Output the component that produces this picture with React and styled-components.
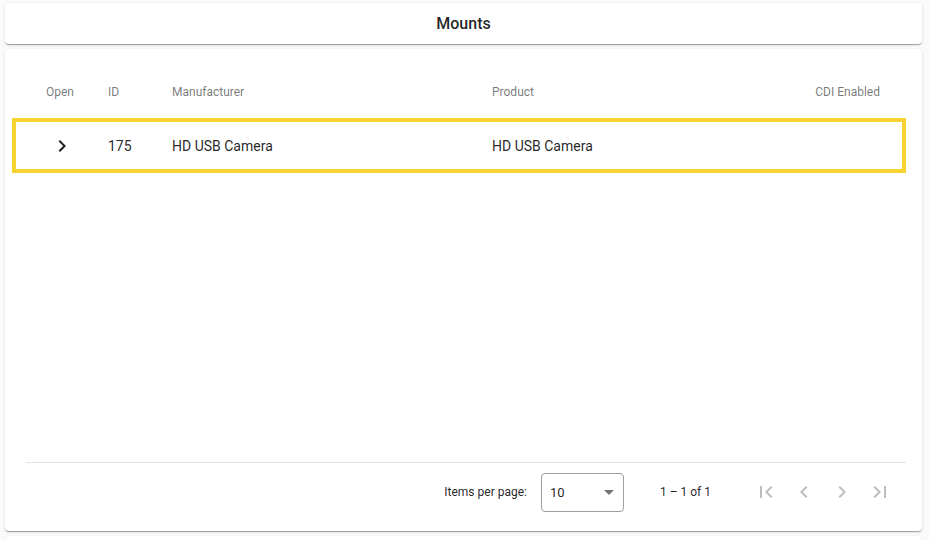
import styled, { createGlobalStyle } from "styled-components";

const Global = createGlobalStyle`
  body { margin: 0; background: #fafafa; font-family: Roboto, "Liberation Sans", sans-serif; }
`;

const Page = styled.div`
  display: flex;
  flex-direction: column;
  gap: 5px;
  padding: 3px 7px 0 5px;
  height: 540px;
  box-sizing: border-box;
  overflow: hidden;
`;

const Card = styled.div`
  background: #fff;
  border-radius: 4px;
  flex-shrink: 0;
  box-shadow: 0 2px 1px -1px rgba(0,0,0,.2), 0 1px 1px 0 rgba(0,0,0,.14), 0 1px 3px 0 rgba(0,0,0,.12);
`;

const TitleCard = styled(Card)`
  height: 41px;
  display: flex;
  align-items: center;
  justify-content: center;
  font-size: 16px;
  font-weight: 500;
  color: rgba(0,0,0,.87);
`;

const MainCard = styled(Card)`
  height: 482px;
  display: flex;
  flex-direction: column;
  padding: 0 16px 0 7px;
`;

const HeadRow = styled.div`
  display: grid;
  grid-template-columns: 96px 64px 320px 1fr 120px;
  align-items: center;
  margin-top: 28px;
  height: 30px;
  padding: 0 26px 0 0;
  font-size: 12px;
  color: rgba(0,0,0,.54);
`;

const Row = styled.div`
  display: grid;
  grid-template-columns: 92px 64px 320px 1fr 120px;
  align-items: center;
  margin-top: 11px;
  height: 47px;
  border: 4px solid #f6d330;
  padding-right: 22px;
  font-size: 14px;
  color: rgba(0,0,0,.87);
`;

const Cell = styled.div`
  text-align: ${(p) => p.align || "left"};
`;

const IconCell = styled.div`
  display: flex;
  justify-content: center;
`;

const Spacer = styled.div` flex: 1; `;

const Footer = styled.div`
  margin-left: 14px;
  margin-bottom: 15px;
  border-top: 1px solid #e0e0e0;
  height: 48px;
  padding-top: 5px;
  display: flex;
  align-items: center;
  justify-content: flex-end;
  font-size: 12px;
  color: rgba(0,0,0,.87);
`;

const Select = styled.div`
  margin-left: 14px;
  width: 83px;
  height: 39px;
  box-sizing: border-box;
  border: 1px solid #9e9e9e;
  border-radius: 4px;
  display: flex;
  align-items: center;
  justify-content: space-between;
  padding: 0 9px 0 8px;
  font-size: 13px;
`;

const Range = styled.div`
  margin: 0 37px 0 36px;
`;

const Nav = styled.div`
  display: flex;
  gap: 2px;
  margin-right: 8px;
`;

const NavBtn = styled.div`
  width: 36px;
  height: 36px;
  display: flex;
  align-items: center;
  justify-content: center;
`;

const Icon = ({ d, color = "rgba(0,0,0,.26)", size = 24 }) => (
  <svg width={size} height={size} viewBox="0 0 24 24"><path d={d} fill={color} /></svg>
);

const CHEV = "M10 6L8.59 7.41 13.17 12l-4.58 4.59L10 18l6-6z";

export default function App() {
  return (
    <Page>
      <Global />
      <TitleCard>Mounts</TitleCard>
      <MainCard>
        <HeadRow>
          <Cell align="center">Open</Cell>
          <Cell>ID</Cell>
          <Cell>Manufacturer</Cell>
          <Cell>Product</Cell>
          <Cell align="right">CDI Enabled</Cell>
        </HeadRow>
        <Row>
          <IconCell>
            <Icon d={CHEV} color="rgba(0,0,0,.87)" />
          </IconCell>
          <Cell>175</Cell>
          <Cell>HD USB Camera</Cell>
          <Cell>HD USB Camera</Cell>
          <Cell />
        </Row>
        <Spacer />
        <Footer>
          Items per page:
          <Select>
            10
            <svg width="10" height="5" viewBox="0 0 10 5"><path d="M0 0l5 5 5-5z" fill="rgba(0,0,0,.54)" /></svg>
          </Select>
          <Range>1 – 1 of 1</Range>
          <Nav>
            <NavBtn><Icon d="M18.41 16.59L13.82 12l4.59-4.59L17 6l-6 6 6 6zM6 6h2v12H6z" /></NavBtn>
            <NavBtn><Icon d="M15.41 7.41L14 6l-6 6 6 6 1.41-1.41L10.83 12z" /></NavBtn>
            <NavBtn><Icon d={CHEV} /></NavBtn>
            <NavBtn><Icon d="M5.59 7.41L10.18 12l-4.59 4.59L7 18l6-6-6-6zM16 6h2v12h-2z" /></NavBtn>
          </Nav>
        </Footer>
      </MainCard>
      <Card style={{ height: 20 }} />
    </Page>
  );
}
